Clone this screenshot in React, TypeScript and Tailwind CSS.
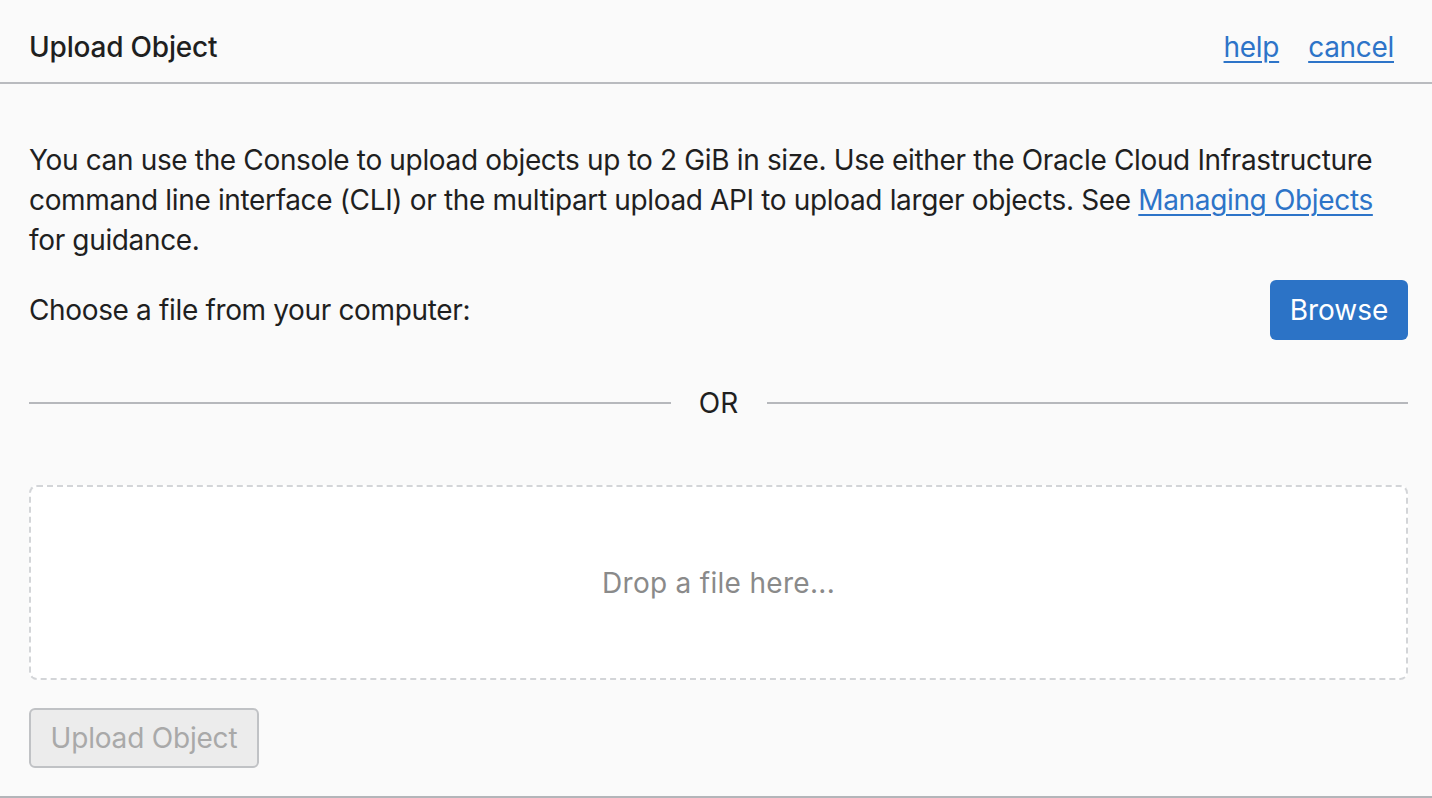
const font = { fontFamily: 'Inter, "Liberation Sans", sans-serif' };

export default function App() {
  return (
    <div
      className="w-[1432px] h-[798px] bg-[#fafafa] text-[#1f1f1f] flex flex-col border-b-2 border-[#b3b5b9]"
      style={font}
    >
      {/* Header */}
      <div className="h-[84px] shrink-0 flex items-center justify-between pl-[29px] pr-[38px] border-b-2 border-[#b9bbbf] pt-[12px]">
        <h1 className="text-[28px] font-medium tracking-[-0.2px]">Upload Object</h1>
        <div className="flex gap-[29px] text-[28px] text-[#2d74c8] tracking-[-0.3px]">
          <a href="#" className="underline underline-offset-[4px] decoration-[1.5px]">help</a>
          <a href="#" className="underline underline-offset-[4px] decoration-[1.5px]">cancel</a>
        </div>
      </div>

      {/* Body */}
      <div className="flex-1 flex flex-col pl-[29px] pr-[24px] pt-[56px] tracking-[-0.35px]">
        <p className="text-[28px] leading-[40px]">
          You can use the Console to upload objects up to 2 GiB in size. Use either the Oracle Cloud
          Infrastructure command line interface (CLI) or the multipart upload API to upload larger
          objects. See{' '}
          <a href="#" className="text-[#2d74c8] underline underline-offset-[4px] decoration-[1.5px]">
            Managing Objects
          </a>{' '}
          for guidance.
        </p>

        <div className="flex items-center justify-between mt-[20px]">
          <span className="text-[28px]">Choose a file from your computer:</span>
          <button className="h-[60px] w-[138px] rounded-[6px] bg-[#2c73c6] text-white text-[28px] tracking-normal">
            Browse
          </button>
        </div>

        <div className="flex items-center mt-[33px] h-[60px]">
          <div className="flex-1 h-[2px] bg-[#b6b8bc]" />
          <span className="w-[96px] text-center text-[28px] tracking-normal">OR</span>
          <div className="flex-1 h-[2px] bg-[#b6b8bc]" />
        </div>

        <div className="mt-[52px] h-[195px] rounded-[8px] border-2 border-dashed border-[#d3d5d8] bg-white flex items-center justify-center">
          <span className="text-[28px] text-[#8a8a8a] tracking-[0.3px]">Drop a file here...</span>
        </div>

        <div className="mt-[28px]">
          <button className="h-[60px] w-[230px] rounded-[6px] border-2 border-[#c0c2c5] bg-[#ececec] text-[28px] text-[#a9a9a9] tracking-[-0.2px]">
            Upload Object
          </button>
        </div>
      </div>
    </div>
  );
}
